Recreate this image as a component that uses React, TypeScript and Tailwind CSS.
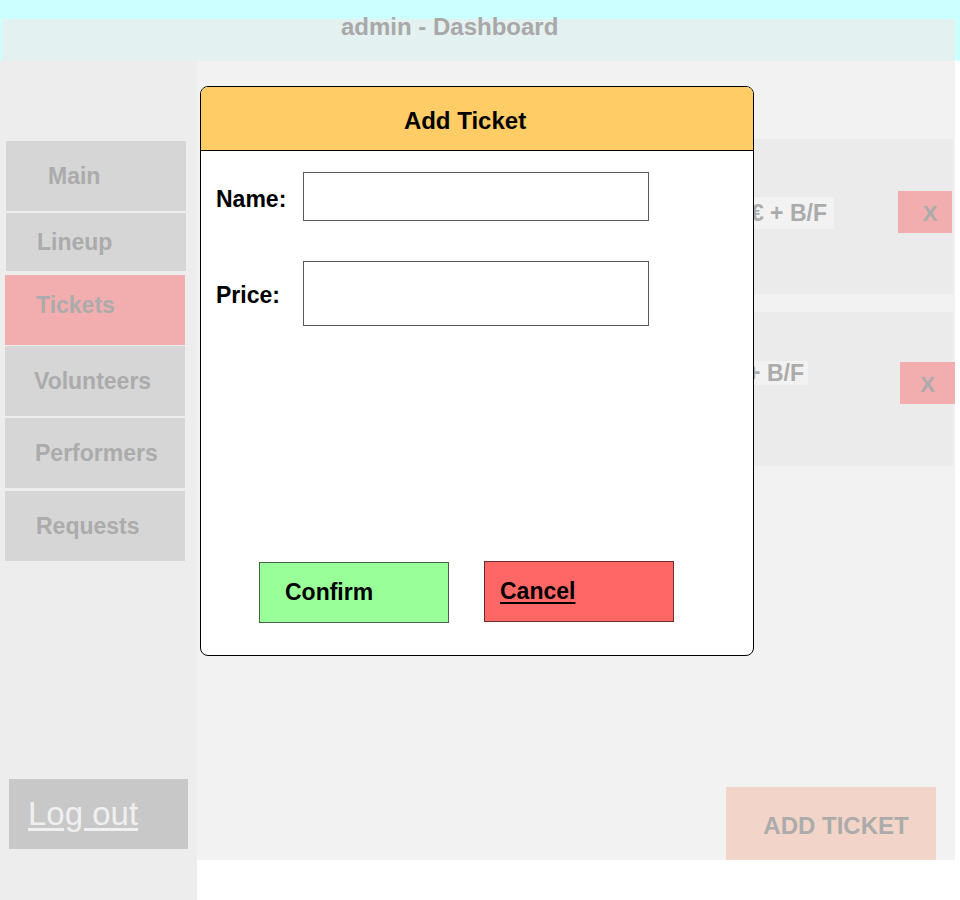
const font = { fontFamily: '"Liberation Sans", Arial, sans-serif' };

type NavItem = { label: string; cls: string; active?: boolean };

const navItems: NavItem[] = [
  { label: "Main", cls: "ml-[6px] w-[180px] h-[70px] pl-[42px]" },
  { label: "Lineup", cls: "ml-[6px] w-[180px] h-[58px] mt-[2px] pl-[31px]" },
  { label: "Tickets", cls: "ml-[5px] w-[180px] h-[70px] mt-[4px] pl-[31px] pb-[10px]", active: true },
  { label: "Volunteers", cls: "ml-[5px] w-[180px] h-[70px] mt-[1px] pl-[29px]" },
  { label: "Performers", cls: "ml-[5px] w-[180px] h-[70px] mt-[2px] pl-[30px]" },
  { label: "Requests", cls: "ml-[5px] w-[180px] h-[70px] mt-[3px] pl-[31px]" },
];

export default function App() {
  return (
    <div className="relative w-[960px] h-[900px] bg-white overflow-hidden" style={font}>
      {/* header band */}
      <header className="h-[61px] bg-[#CCFFFF] pt-[19px] pl-[2px] pr-[5px]">
        <div className="h-[42px] bg-[#E3F1F1] pl-[339px] flex items-start">
          <h1 className="-mt-[4px] text-[24px] leading-[24px] font-bold text-[#A8A8A8]">admin - Dashboard</h1>
        </div>
      </header>

      <div className="flex">
        {/* sidebar */}
        <aside className="w-[197px] h-[839px] bg-[#EDEDED] flex flex-col pt-[80px]">
          {navItems.map((item) => (
            <div
              key={item.label}
              className={`${item.cls} flex items-center text-[23px] font-bold text-[#ABABAB] ${
                item.active ? "bg-[#F2AEAE]" : "bg-[#D6D6D6]"
              }`}
            >
              {item.label}
            </div>
          ))}
          <div className="mt-[218px] ml-[9px] w-[179px] h-[70px] bg-[#C8C8C8] flex items-center pl-[19px] pb-[2px]">
            <a href="#" className="text-[33px] leading-none text-[#F0F0F0] underline underline-offset-[3px]">
              Log out
            </a>
          </div>
        </aside>

        {/* main */}
        <main className="w-[758px] h-[799px] bg-[#F2F2F2] flex flex-col pl-[13px] pr-[2px] pt-[78px]">
          <div className="h-[155px] bg-[#EBEBEB] flex items-start">
            <div className="w-[624px] flex justify-end mt-[58px]">
              <span className="h-[32px] pl-[4px] pr-[7px] bg-[#F2F2F2] text-[23px] font-bold text-[#ABABAB] flex items-center">
                10€ + B/F
              </span>
            </div>
            <button className="ml-auto mr-[1px] mt-[52px] w-[54px] h-[42px] bg-[#F2AEAE] text-[22px] font-bold text-[#ABABAB] pt-[2px] pl-[10px]">
              X
            </button>
          </div>
          <div className="mt-[18px] h-[154px] bg-[#EBEBEB] flex items-start">
            <div className="w-[598px] flex justify-end mt-[49px]">
              <span className="h-[24px] px-[4px] bg-[#F2F2F2] text-[23px] font-bold text-[#ABABAB] flex items-center">
                5€ + B/F
              </span>
            </div>
            <button className="ml-auto -mr-[2px] mt-[50px] w-[55px] h-[42px] bg-[#F2AEAE] text-[22px] font-bold text-[#ABABAB] pt-[2px]">
              X
            </button>
          </div>
          <button className="mt-auto self-end mr-[17px] w-[210px] h-[73px] bg-[#F2D5C8] text-[24px] font-bold text-[#ABABAB] pt-[4px] pl-[10px]">
            ADD TICKET
          </button>
        </main>
      </div>

      {/* modal */}
      <div className="absolute left-[200px] top-[86px] w-[554px] h-[570px] rounded-[8px] border border-black bg-white overflow-hidden flex flex-col">
        <div className="h-[64px] bg-[#FFCC66] border-b border-black flex items-center justify-center pr-[24px] pt-[4px]">
          <h2 className="text-[24px] font-bold text-black">Add Ticket</h2>
        </div>
        <div className="flex items-center mt-[21px] pl-[15px]">
          <label className="w-[87px] text-[23px] font-bold text-black pt-[5px]">Name:</label>
          <input className="w-[346px] h-[49px] border border-[#5a5a5a] bg-white outline-none" />
        </div>
        <div className="flex items-center mt-[40px] pl-[15px]">
          <label className="w-[87px] text-[23px] font-bold text-black pt-[4px]">Price:</label>
          <input className="w-[346px] h-[65px] border border-[#5a5a5a] bg-white outline-none" />
        </div>
        <div className="flex items-start mt-[235px] pl-[58px] gap-[35px]">
          <button className="mt-[1px] w-[190px] h-[61px] bg-[#99FF99] border border-[#4d5e4d] text-left pl-[25px] text-[23px] font-bold text-black">
            Confirm
          </button>
          <button className="w-[190px] h-[61px] bg-[#FF6666] border border-[#6b2f2f] text-left pl-[15px] text-[23px] font-bold text-black underline underline-offset-[3px]">
            Cancel
          </button>
        </div>
      </div>
    </div>
  );
}
